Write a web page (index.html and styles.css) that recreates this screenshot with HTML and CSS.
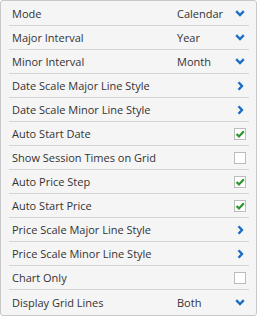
FILE: index.html
```html
<!DOCTYPE html>
<html>
<head>
    <title>Grid Settings</title>
    <meta charset="UTF-8">
    <link rel="stylesheet" href="styles.css">
</head>
<body>
    <div class="panel">
        <div class="row">
            <span class="label">Mode</span>
            <span class="value">Calendar</span>
            <span class="icon"><svg width="10" height="7" viewBox="0 0 10 7"><path d="M1.2 1.2 L5 5 L8.8 1.2" fill="none" stroke="#1a6fc4" stroke-width="2.4"/></svg></span>
        </div>
        <div class="row">
            <span class="label">Major Interval</span>
            <span class="value">Year</span>
            <span class="icon"><svg width="10" height="7" viewBox="0 0 10 7"><path d="M1.2 1.2 L5 5 L8.8 1.2" fill="none" stroke="#1a6fc4" stroke-width="2.4"/></svg></span>
        </div>
        <div class="row">
            <span class="label">Minor Interval</span>
            <span class="value">Month</span>
            <span class="icon"><svg width="10" height="7" viewBox="0 0 10 7"><path d="M1.2 1.2 L5 5 L8.8 1.2" fill="none" stroke="#1a6fc4" stroke-width="2.4"/></svg></span>
        </div>
        <div class="row">
            <span class="label">Date Scale Major Line Style</span>
            <span class="icon"><svg width="7" height="10" viewBox="0 0 7 10"><path d="M1.5 1.2 L5 5 L1.5 8.8" fill="none" stroke="#1a6fc4" stroke-width="2.4"/></svg></span>
        </div>
        <div class="row">
            <span class="label">Date Scale Minor Line Style</span>
            <span class="icon"><svg width="7" height="10" viewBox="0 0 7 10"><path d="M1.5 1.2 L5 5 L1.5 8.8" fill="none" stroke="#1a6fc4" stroke-width="2.4"/></svg></span>
        </div>
        <div class="row">
            <span class="label">Auto Start Date</span>
            <span class="icon"><span class="check"><svg width="10" height="10" viewBox="0 0 10 10"><path d="M1.5 5 L4 7.5 L8.8 2.2" fill="none" stroke="#2a972a" stroke-width="2.2"/></svg></span></span>
        </div>
        <div class="row">
            <span class="label">Show Session Times on Grid</span>
            <span class="icon"><span class="check"></span></span>
        </div>
        <div class="row">
            <span class="label">Auto Price Step</span>
            <span class="icon"><span class="check"><svg width="10" height="10" viewBox="0 0 10 10"><path d="M1.5 5 L4 7.5 L8.8 2.2" fill="none" stroke="#2a972a" stroke-width="2.2"/></svg></span></span>
        </div>
        <div class="row">
            <span class="label">Auto Start Price</span>
            <span class="icon"><span class="check"><svg width="10" height="10" viewBox="0 0 10 10"><path d="M1.5 5 L4 7.5 L8.8 2.2" fill="none" stroke="#2a972a" stroke-width="2.2"/></svg></span></span>
        </div>
        <div class="row">
            <span class="label">Price Scale Major Line Style</span>
            <span class="icon"><svg width="7" height="10" viewBox="0 0 7 10"><path d="M1.5 1.2 L5 5 L1.5 8.8" fill="none" stroke="#1a6fc4" stroke-width="2.4"/></svg></span>
        </div>
        <div class="row">
            <span class="label">Price Scale Minor Line Style</span>
            <span class="icon"><svg width="7" height="10" viewBox="0 0 7 10"><path d="M1.5 1.2 L5 5 L1.5 8.8" fill="none" stroke="#1a6fc4" stroke-width="2.4"/></svg></span>
        </div>
        <div class="row">
            <span class="label">Chart Only</span>
            <span class="icon"><span class="check"></span></span>
        </div>
        <div class="row">
            <span class="label">Display Grid Lines</span>
            <span class="value">Both</span>
            <span class="icon"><svg width="10" height="7" viewBox="0 0 10 7"><path d="M1.2 1.2 L5 5 L8.8 1.2" fill="none" stroke="#1a6fc4" stroke-width="2.4"/></svg></span>
        </div>
    </div>
</body>
</html>
```

FILE: styles.css
```css
body {
    margin: 0;
    padding: 0;
    background: #ffffff;
    font-family: "Open Sans", "Liberation Sans", sans-serif;
}

.panel {
    width: 255px;
    padding: 1px 0;
    background: #f5f5f5;
    border: 1px solid #c8c8c8;
    border-radius: 3px;
}

.row {
    display: flex;
    align-items: center;
    height: 24px;
    box-sizing: border-box;
    margin: 0 7px 0 8px;
    padding: 0 0 0 3px;
    border-bottom: 1px solid #d4d4d4;
    font-size: 11px;
    color: #333333;
}

.row:last-child {
    border-bottom: none;
}

.label {
    flex: 1;
    white-space: nowrap;
}

.value {
    width: 56px;
}

.icon {
    width: 14px;
    margin-right: 2px;
    display: flex;
    justify-content: center;
    align-items: center;
}

.check {
    width: 12px;
    height: 12px;
    box-sizing: border-box;
    border: 1px solid #bdbdbd;
    background: #ffffff;
    display: flex;
    justify-content: center;
    align-items: center;
}
```
